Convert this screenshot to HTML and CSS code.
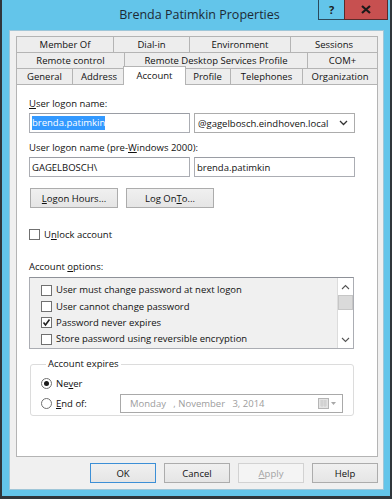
FILE: index.html
```html
<!DOCTYPE html>
<html lang="en">
<head>
    <meta charset="UTF-8">
    <title>Brenda Patimkin Properties</title>
    <link rel="stylesheet" href="styles.css">
</head>
<body>
    <div class="window">
        <div class="titlebar">
            <div></div>
            <div class="title">Brenda Patimkin Properties</div>
            <div class="controls">
                <div class="ctl help">?</div>
                <div class="ctl close">
                    <svg width="10" height="9" viewBox="0 0 10 9"><path d="M1 1 L9 8 M9 1 L1 8" stroke="#1a1a1a" stroke-width="2.2"/></svg>
                </div>
            </div>
        </div>
        <div class="client">
            <div class="tabs">
                <div class="tab-row row1">
                    <div class="tab">Member Of</div>
                    <div class="tab">Dial-in</div>
                    <div class="tab">Environment</div>
                    <div class="tab">Sessions</div>
                </div>
                <div class="tab-row row2">
                    <div class="tab">Remote control</div>
                    <div class="tab">Remote Desktop Services Profile</div>
                    <div class="tab">COM+</div>
                </div>
                <div class="tab-row row3">
                    <div class="tab">General</div>
                    <div class="tab">Address</div>
                    <div class="tab active">Account</div>
                    <div class="tab">Profile</div>
                    <div class="tab">Telephones</div>
                    <div class="tab">Organization</div>
                </div>
            </div>
            <div class="panel">
                <div class="label"><u>U</u>ser logon name:</div>
                <div class="field-row">
                    <div class="input"><span class="selected">brenda.patimkin</span></div>
                    <div class="input combo">
                        <span>@gagelbosch.eindhoven.local</span>
                        <svg width="9" height="6" viewBox="0 0 9 6"><path d="M1 1 L4.5 4.5 L8 1" fill="none" stroke="#333" stroke-width="1.3"/></svg>
                    </div>
                </div>
                <div class="label second">User logon name (pre-<u>W</u>indows 2000):</div>
                <div class="field-row">
                    <div class="input">GAGELBOSCH\</div>
                    <div class="input">brenda.patimkin</div>
                </div>
                <div class="button-row">
                    <div class="btn wide"><u>L</u>ogon Hours...</div>
                    <div class="btn wide">Log On <u>T</u>o...</div>
                </div>
                <div class="check unlock">
                    <span class="box"></span>
                    <span>U<u>n</u>lock account</span>
                </div>
                <div class="label options">Account <u>o</u>ptions:</div>
                <div class="listbox">
                    <div class="items">
                        <div class="check"><span class="box"></span><span>User must change password at next logon</span></div>
                        <div class="check"><span class="box"></span><span>User cannot change password</span></div>
                        <div class="check"><span class="box checked"><svg width="9" height="9" viewBox="0 0 9 9"><path d="M1.5 4.5 L3.5 7 L7.5 1.5" fill="none" stroke="#222" stroke-width="1.6"/></svg></span><span>Password never expires</span></div>
                        <div class="check"><span class="box"></span><span>Store password using reversible encryption</span></div>
                    </div>
                    <div class="scrollbar">
                        <div class="arrow"><svg width="9" height="6" viewBox="0 0 9 6"><path d="M1 5 L4.5 1.5 L8 5" fill="none" stroke="#555" stroke-width="1.1"/></svg></div>
                        <div class="thumb"></div>
                        <div class="track"></div>
                        <div class="arrow"><svg width="9" height="6" viewBox="0 0 9 6"><path d="M1 1 L4.5 4.5 L8 1" fill="none" stroke="#555" stroke-width="1.1"/></svg></div>
                    </div>
                </div>
                <fieldset class="group">
                    <legend>Account expires</legend>
                    <div class="radio-row">
                        <span class="radio on"></span>
                        <span>Ne<u>v</u>er</span>
                    </div>
                    <div class="radio-row">
                        <span class="radio"></span>
                        <span class="end-label"><u>E</u>nd of:</span>
                        <div class="date">
                            <span class="date-text">Monday   , November   3, 2014</span>
                            <span class="cal">
                                <svg width="20" height="11" viewBox="0 0 20 11"><rect x="0.5" y="0.5" width="10" height="10" fill="#e4e4e4" stroke="#b5b5b5"/><path d="M2 3h7M2 5h7M2 7h7M4 2v7M7 2v7" stroke="#c8c8c8" stroke-width="0.8"/><path d="M13 4 L18 4 L15.5 7 Z" fill="#a8a8a8"/></svg>
                            </span>
                        </div>
                    </div>
                </fieldset>
            </div>
            <div class="footer">
                <div class="btn default">OK</div>
                <div class="btn">Cancel</div>
                <div class="btn disabled"><u>A</u>pply</div>
                <div class="btn">Help</div>
            </div>
        </div>
    </div>
</body>
</html>
```

FILE: styles.css
```css
* {
    margin: 0;
    padding: 0;
    box-sizing: border-box;
}

body {
    background-color: #ffffff;
    font-family: 'Open Sans', 'Noto Sans', sans-serif;
    font-size: 9.5px;
    color: #111;
}

u {
    text-decoration: underline;
    text-underline-offset: 1px;
}

.window {
    width: 392px;
    height: 499px;
    background-color: #63c5ea;
    border-left: 2px solid #30363b;
    border-right: 2px solid #30363b;
    border-bottom: 3px solid #30363b;
    padding: 0 6px 6px 7px;
    display: flex;
    flex-direction: column;
}

.titlebar {
    height: 30px;
    display: grid;
    grid-template-columns: 1fr auto 1fr;
    align-items: start;
}

.title {
    font-size: 12.5px;
    color: #1d2a35;
    margin-top: 6px;
    margin-left: 6px;
}

.controls {
    display: flex;
    justify-content: flex-end;
    margin-right: -4px;
}

.ctl {
    height: 20px;
    display: flex;
    align-items: center;
    justify-content: center;
    border: 1px solid #2b4a5c;
    border-top: none;
}

.help {
    width: 26px;
    font-weight: bold;
    font-size: 11px;
    color: #1a1a1a;
    border-right: none;
}

.close {
    width: 44px;
    background-color: #c75050;
    border-color: #5a2b2b;
}

.client {
    flex: 1;
    background-color: #f0f0f0;
    border: 1px solid #9fc6d8;
    padding: 5px 5px 0 6px;
    display: flex;
    flex-direction: column;
}

.tab-row {
    display: grid;
    height: 16px;
}

.row1 {
    grid-template-columns: 97px 76px 101px 88px;
}

.row2 {
    grid-template-columns: 108px 183px 71px;
}

.row3 {
    grid-template-columns: 56px 53px 59px 46px 72px 76px;
}

.tab {
    background-color: #ededed;
    border-top: 1px solid #b4b4b4;
    border-left: 1px solid #b4b4b4;
    text-align: center;
    line-height: 15px;
    white-space: nowrap;
}

.tab:last-child {
    border-right: 1px solid #b4b4b4;
}

.tab.active {
    position: relative;
    z-index: 1;
    background-color: #fff;
    margin: -2px -2px -1px -2px;
    border-right: 1px solid #b4b4b4;
    padding-top: 1px;
}

.panel {
    height: 373px;
    background-color: #fff;
    border: 1px solid #b4b4b4;
    padding: 12px 0 0 12px;
}

.label {
    line-height: 13px;
    height: 13px;
}

.label.second {
    margin-top: 8px;
}

.field-row {
    display: flex;
    gap: 4px;
    margin-top: 3px;
}

.input {
    width: 161px;
    height: 20px;
    border: 1px solid #abadb3;
    border-top-color: #9a9da4;
    background-color: #fff;
    padding: 0 2px;
    display: flex;
    align-items: center;
    white-space: nowrap;
}

.selected {
    background-color: #3399ff;
    color: #fff;
    line-height: 14px;
}

.combo {
    justify-content: space-between;
    padding: 0 6px 0 3px;
    border-color: #acacac;
}

.button-row {
    display: flex;
    gap: 8px;
    margin: 11px 0 0 1px;
}

.btn {
    width: 66px;
    height: 20px;
    border: 1px solid #acacac;
    background: linear-gradient(#f0f0f0, #e5e5e5);
    display: flex;
    align-items: center;
    justify-content: center;
}

.btn.wide {
    width: 88px;
}

.btn.default {
    border-color: #3c8fd6;
}

.btn.disabled {
    background: #f4f4f4;
    border-color: #d2d2d2;
    color: #a3a3a3;
}

.check {
    display: flex;
    align-items: center;
    gap: 4px;
    height: 16px;
    white-space: nowrap;
}

.box {
    width: 11px;
    height: 11px;
    border: 1px solid #707070;
    background-color: #fff;
    display: flex;
    align-items: center;
    justify-content: center;
}

.unlock {
    margin-top: 18px;
}

.label.options {
    margin-top: 18px;
}

.listbox {
    width: 325px;
    height: 72px;
    margin-top: 4px;
    border: 1px solid #abadb3;
    border-top-color: #8e9198;
    background-color: #f0f0f0;
    display: flex;
}

.items {
    flex: 1;
    padding: 4px 0 0 11px;
    line-height: 16px;
}

.items .check {
    height: 16.4px;
}

.scrollbar {
    width: 16px;
    background-color: #fff;
    border-left: 1px solid #dcdcdc;
    display: flex;
    flex-direction: column;
}

.arrow {
    height: 17px;
    display: flex;
    align-items: center;
    justify-content: center;
}

.thumb {
    height: 15px;
    background-color: #dadada;
    border: 1px solid #c6c6c6;
}

.track {
    flex: 1;
}

.group {
    width: 324px;
    height: 58px;
    margin: 9px 0 0 1px;
    border: 1px solid #dcdcdc;
    border-radius: 3px;
    padding: 3px 0 0 10px;
}

.group legend {
    margin-left: 5px;
    padding: 0 2px;
    line-height: 12px;
}

.radio-row {
    display: flex;
    align-items: center;
    gap: 4px;
    height: 20px;
}

.radio {
    width: 11px;
    height: 11px;
    border: 1px solid #707070;
    border-radius: 50%;
    background-color: #fff;
    display: flex;
    align-items: center;
    justify-content: center;
}

.radio.on::after {
    content: "";
    width: 5px;
    height: 5px;
    border-radius: 50%;
    background-color: #1a1a1a;
}

.end-label {
    width: 60px;
}

.date {
    width: 223px;
    height: 19px;
    border: 1px solid #a9a9a9;
    background-color: #fff;
    display: flex;
    align-items: center;
    justify-content: space-between;
    padding: 0 4px 0 9px;
}

.date-text {
    white-space: pre;
    color: #9d9d9d;
}

.cal {
    display: flex;
}

.footer {
    display: flex;
    justify-content: flex-end;
    gap: 8px;
    padding: 6px 0 0 0;
}
```
